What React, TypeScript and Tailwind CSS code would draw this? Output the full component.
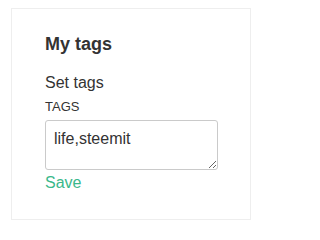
export default function App() {
  return (
    <div
      className="h-[233px] w-[266px] bg-white pl-[11px] pt-[8px]"
      style={{ fontFamily: '"Liberation Sans", Arial, sans-serif' }}
    >
      <div className="h-[212px] w-[240px] border border-[#eeeeee] bg-white pl-[33px] pt-[24px] text-[#333333]">
        {/* heading */}
        <h4 className="text-[18px] font-bold leading-[22px]">My tags</h4>

        <div className="mt-[19px] text-[16px] leading-[18px]">Set tags</div>
        <label className="mt-[7px] block text-[13px] leading-[15px]">TAGS</label>

        <textarea
          defaultValue="life,steemit"
          className="mt-[6px] block h-[50px] w-[173px] resize-y rounded-[3px] border border-[#cacaca] px-[8px] pt-[9px] pb-[4px] text-[16px] leading-[18px] text-[#333333] outline-none"
        />

        <a href="#" className="mt-[3px] block text-[16px] leading-[20px] text-[#3ab88b]">
          Save
        </a>
      </div>
    </div>
  );
}
